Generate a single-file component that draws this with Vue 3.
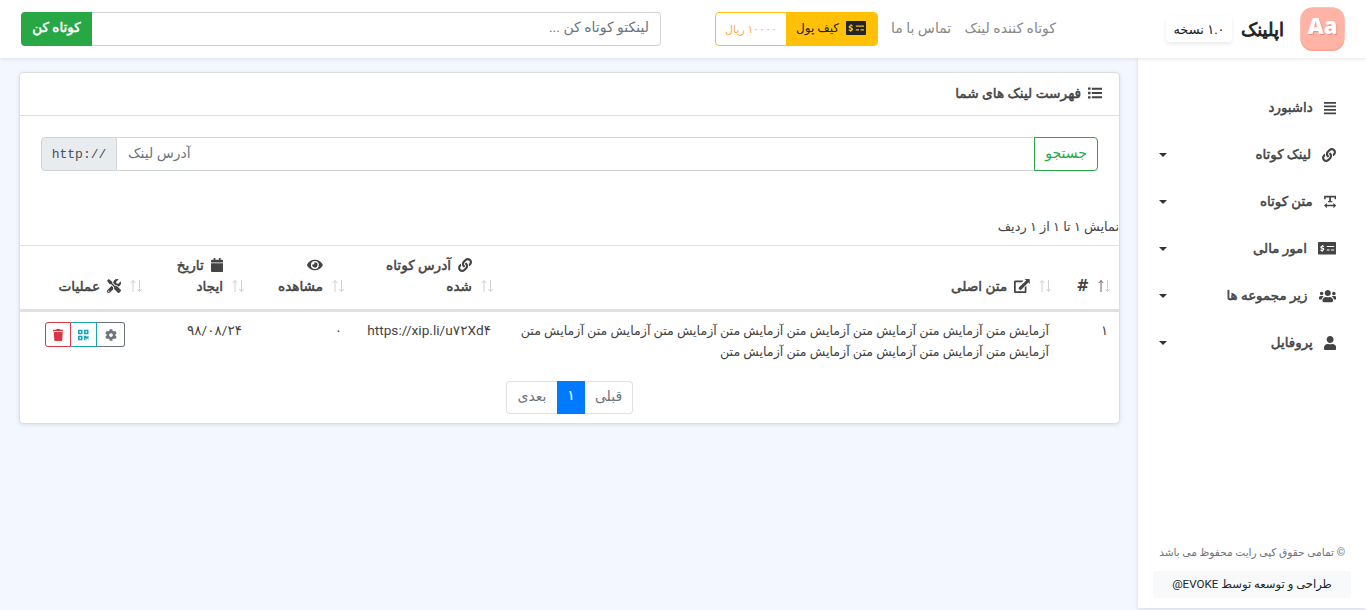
<script setup>
import { h } from 'vue'

const icons = {
  bars: [448, 512, 'M0 32h448v64H0zM0 160h448v64H0zM0 288h448v64H0zM0 416h448v64H0z'],
  list: [512, 512, 'M0 56h92v84H0zM0 214h92v84H0zM0 372h92v84H0zM140 62h372v72H140zM140 220h372v72H140zM140 378h372v72H140z'],
  link: [512, 512, 'M326.612 185.391c59.747 59.809 58.927 155.698.36 214.59-.11.12-.24.25-.36.37l-67.2 67.2c-59.27 59.27-155.699 59.262-214.96 0-59.27-59.26-59.27-155.7 0-214.96l37.106-37.106c9.84-9.84 26.786-3.3 27.294 10.606.648 17.722 3.826 35.527 9.69 52.721 1.986 5.822.567 12.262-3.783 16.612l-13.087 13.087c-28.026 28.026-28.905 73.66-1.155 101.96 28.024 28.579 74.086 28.749 102.325.51l67.2-67.19c28.191-28.191 28.073-73.757 0-101.83-3.701-3.694-7.429-6.564-10.341-8.569a16.037 16.037 0 0 1-6.947-12.606c-.396-10.567 3.348-21.456 11.698-29.806l21.054-21.055c5.521-5.521 14.182-6.199 20.584-1.731a152.482 152.482 0 0 1 20.522 17.197zM467.547 44.449c-59.261-59.262-155.69-59.27-214.96 0l-67.2 67.2c-.12.12-.25.25-.36.37-58.566 58.892-59.387 154.781.36 214.59a152.454 152.454 0 0 0 20.521 17.196c6.402 4.468 15.064 3.789 20.584-1.731l21.054-21.055c8.35-8.35 12.094-19.239 11.698-29.806a16.037 16.037 0 0 0-6.947-12.606c-2.912-2.005-6.64-4.875-10.341-8.569-28.073-28.073-28.191-73.639 0-101.83l67.2-67.19c28.239-28.239 74.3-28.069 102.325.51 27.75 28.3 26.872 73.934-1.155 101.96l-13.087 13.087c-4.35 4.35-5.769 10.79-3.783 16.612 5.864 17.194 9.042 34.999 9.69 52.721.509 13.906 17.454 20.446 27.294 10.606l37.106-37.106c59.271-59.259 59.271-155.699.001-214.959z'],
  textWidth: [448, 512, 'M4 28h440v124h-56V92H256v124h48v52H144v-52h48V92H60v60H4zM0 384l104-96v66h240v-66l104 96-104 96v-66H104v66z'],
  check: [640, 448, 'M24 0h592q24 0 24 24v400q0 24-24 24H24q-24 0-24-24V24Q0 0 24 0zM312 146v36h264v-36zM312 264v36h104v-36zM464 264v36h112v-36zM144 104v28c-76 10-74 94-12 106 48 10 48 36 12 38-20 0-34-8-46-14l-18 36c18 12 34 18 48 20v26h40v-26c72-12 74-100 10-114-48-10-50-34-10-34 14 0 24 4 38 10l16-34c-12-8-26-12-38-14v-28z'],
  users: [640, 512, 'M96 224c35.3 0 64-28.7 64-64s-28.7-64-64-64-64 28.7-64 64 28.7 64 64 64zm448 0c35.3 0 64-28.7 64-64s-28.7-64-64-64-64 28.7-64 64 28.7 64 64 64zm32 32h-64c-17.6 0-33.5 7.1-45.1 18.6 40.3 22.1 68.9 62 75.1 109.4h66c17.7 0 32-14.3 32-32v-32c0-35.3-28.7-64-64-64zm-256 0c61.9 0 112-50.1 112-112S381.9 32 320 32 208 82.1 208 144s50.1 112 112 112zm76.8 32h-8.3c-20.8 10-43.9 16-68.5 16s-47.6-6-68.5-16h-8.3C179.6 288 128 339.6 128 403.2V432c0 26.5 21.5 48 48 48h288c26.5 0 48-21.5 48-48v-28.8c0-63.6-51.6-115.2-115.2-115.2zm-223.7-13.4C161.5 263.1 145.6 256 128 256H64c-35.3 0-64 28.7-64 64v32c0 17.7 14.3 32 32 32h65.9c6.3-47.4 34.9-87.3 75.2-109.4z'],
  user: [448, 512, 'M224 256c70.7 0 128-57.3 128-128S294.7 0 224 0 96 57.3 96 128s57.3 128 128 128zm89.6 32h-16.7c-22.2 10.2-46.9 16-72.9 16s-50.6-5.8-72.9-16h-16.7C60.2 288 0 348.2 0 422.4V464c0 26.5 21.5 48 48 48h352c26.5 0 48-21.5 48-48v-41.6c0-74.2-60.2-134.4-134.4-134.4z'],
  external: [576, 512, 'M48 56h300l-62 64H64v328h328V306l64-62v220q0 48-48 48H48q-48 0-48-48V104q0-48 48-48zM392 0h160q24 0 24 24v160l-52-52-262 262-40 10-56-56 10-40L444 52z'],
  eye: [576, 512, 'M572.52 241.4C518.29 135.59 410.93 64 288 64S57.68 135.64 3.48 241.41a32.35 32.35 0 0 0 0 29.19C57.71 376.41 165.07 448 288 448s230.32-71.64 284.52-177.41a32.35 32.35 0 0 0 0-29.19zM288 400a144 144 0 1 1 144-144 143.93 143.93 0 0 1-144 144zm0-240a95.31 95.31 0 0 0-25.31 3.79 47.85 47.85 0 0 1-66.9 66.9A95.78 95.78 0 1 0 288 160z'],
  calendar: [448, 512, 'M12 192h424c6.6 0 12 5.4 12 12v260c0 26.5-21.5 48-48 48H48c-26.5 0-48-21.5-48-48V204c0-6.6 5.4-12 12-12zm436-44v-36c0-26.5-21.5-48-48-48h-48V12c0-6.6-5.4-12-12-12h-40c-6.6 0-12 5.4-12 12v52H160V12c0-6.6-5.4-12-12-12h-40c-6.6 0-12 5.4-12 12v52H48C21.5 64 0 85.5 0 112v36c0 6.6 5.4 12 12 12h424c6.6 0 12-5.4 12-12z'],
  tools: [512, 512, 'M501.1 395.7L384 278.6c-23.1-23.1-57.6-27.6-85.4-13.9L192 158.1V96L64 0 0 64l96 128h62.1l106.6 106.6c-13.6 27.8-9.2 62.3 13.9 85.4l117.1 117.1c14.6 14.6 38.2 14.6 52.7 0l52.7-52.7c14.5-14.6 14.5-38.2 0-52.7zM331.7 225c28.3 0 54.9 11 74.9 31l19.4 19.4c15.8-6.9 30.8-16.5 43.8-29.5 37.1-37.1 49.7-89.3 37.9-136.7-2.2-9-13.5-12.1-20.1-5.5l-74.4 74.4-67.9-11.3L334 98.9l74.4-74.4c6.6-6.6 3.4-17.9-5.7-20.2-47.4-11.7-99.6.9-136.6 37.9-28.5 28.5-41.9 66.1-41.2 103.6l82.1 82.1c8.1-1.9 16.5-2.9 24.7-2.9zm-103.9 82l-56.7-56.7L18.7 402.8c-25 25-25 65.5 0 90.5s65.5 25 90.5 0l123.6-123.6c-7.6-19.9-9.9-41.6-5-62.7zM64 472c-13.2 0-24-10.8-24-24 0-13.3 10.7-24 24-24s24 10.7 24 24c0 13.2-10.7 24-24 24z'],
  cog: [512, 512, 'M487.4 315.7l-42.6-24.6c4.3-23.2 4.3-47 0-70.2l42.6-24.6c4.9-2.8 7.1-8.6 5.5-14-11.1-35.6-30-67.8-54.7-94.6-3.8-4.1-10-5.1-14.8-2.3L380.8 110c-17.9-15.4-38.5-27.3-60.8-35.1V25.8c0-5.6-3.9-10.5-9.4-11.7-36.7-8.2-74.3-7.8-109.2 0-5.5 1.2-9.4 6.1-9.4 11.7V75c-22.2 7.9-42.8 19.8-60.8 35.1L88.7 85.5c-4.9-2.8-11-1.9-14.8 2.3-24.7 26.7-43.6 58.9-54.7 94.6-1.7 5.4.6 11.2 5.5 14L67.3 221c-4.3 23.2-4.3 47 0 70.2l-42.6 24.6c-4.9 2.8-7.1 8.6-5.5 14 11.1 35.6 30 67.8 54.7 94.6 3.8 4.1 10 5.1 14.8 2.3l42.6-24.6c17.9 15.4 38.5 27.3 60.8 35.1v49.2c0 5.6 3.9 10.5 9.4 11.7 36.7 8.2 74.3 7.8 109.2 0 5.5-1.2 9.4-6.1 9.4-11.7v-49.2c22.2-7.9 42.8-19.8 60.8-35.1l42.6 24.6c4.9 2.8 11 1.9 14.8-2.3 24.7-26.7 43.6-58.9 54.7-94.6 1.5-5.5-.7-11.3-5.6-14.1zM256 336c-44.1 0-80-35.9-80-80s35.9-80 80-80 80 35.9 80 80-35.9 80-80 80z'],
  qr: [448, 512, 'M0 224h192V32H0v192zM64 96h64v64H64V96zm192-64v192h192V32H256zm128 128h-64V96h64v64zM0 480h192V288H0v192zm64-128h64v64H64v-64zm352-64h32v128h-96v-32h-32v96h-64V288h96v32h64v-32zm0 160h32v32h-32v-32zm-64 0h32v32h-32v-32z'],
  trash: [448, 512, 'M432 32H312l-9.4-18.7A24 24 0 0 0 281.1 0H166.8a23.72 23.72 0 0 0-21.4 13.3L136 32H16A16 16 0 0 0 0 48v32a16 16 0 0 0 16 16h416a16 16 0 0 0 16-16V48a16 16 0 0 0-16-16zM53.2 467a48 48 0 0 0 47.9 45h245.8a48 48 0 0 0 47.9-45L416 128H32z'],
}

const Icon = (props) => {
  const [w, ht, d] = icons[props.name]
  const height = (props.size * ht) / 512
  return h('svg', { viewBox: `0 0 ${w} ${ht}`, width: (height * w) / ht, height, fill: 'currentColor' }, [
    h('path', { d, 'fill-rule': 'evenodd' }),
  ])
}
Icon.props = ['name', 'size']

const Sort = (props) =>
  h('svg', { viewBox: '0 0 14 14', width: 14, height: 14, fill: 'none', class: 'sort' }, [
    h('path', { d: 'M4 13V1.5M1.8 4L4 1.5L6.2 4', stroke: props.active ? '#666' : '#d0d0d0' }),
    h('path', { d: 'M10.5 1V12.5M8.3 10L10.5 12.5L12.7 10', stroke: '#d0d0d0' }),
  ])
Sort.props = ['active']

const menu = [
  { icon: 'bars', label: 'داشبورد', size: 14 },
  { icon: 'link', label: 'لینک کوتاه', size: 14, sub: true },
  { icon: 'textWidth', label: 'متن کوتاه', size: 14, sub: true },
  { icon: 'check', label: 'امور مالی', size: 14.4, sub: true },
  { icon: 'users', label: 'زیر مجموعه ها', size: 14, sub: true },
  { icon: 'user', label: 'پروفایل', size: 14, sub: true },
]
const columns = [
  { lines: ['#'], active: true, key: 'num' },
  { icon: 'external', lines: ['متن اصلی'] },
  { icon: 'link', lines: ['آدرس کوتاه', 'شده'] },
  { icon: 'eye', lines: ['', 'مشاهده'] },
  { icon: 'calendar', lines: ['تاریخ', 'ایجاد'] },
  { icon: 'tools', lines: ['عملیات'] },
]
</script>

<template>
  <div class="page">
    <header class="top">
      <div class="brand">
        <svg class="logo" viewBox="0 0 45 45" width="45" height="45">
          <rect x="0.5" y="0.5" width="44" height="43.5" rx="12" fill="#ff9f94" />
          <rect x="0.5" y="0.5" width="44" height="42" rx="12" fill="#ffb3a4" />
          <text class="logo-shade" x="23.5" y="27.5" text-anchor="middle">Aa</text>
          <text class="logo-text" x="22.5" y="26.5" text-anchor="middle">Aa</text>
        </svg>
        <span class="name">اپلینک</span>
        <span class="version">۱.۰ نسخه</span>
      </div>
      <nav class="nav"><a>کوتاه کننده لینک</a><a>تماس با ما</a></nav>
      <div class="wallet">
        <span class="wallet-btn"><Icon name="check" :size="16" /><span>کیف پول</span></span>
        <span class="amount">۱۰۰۰۰ ریال</span>
      </div>
      <div class="shorten">
        <div class="shorten-input">لینکتو کوتاه کن ...</div>
        <div class="shorten-btn">کوتاه کن</div>
      </div>
    </header>

    <div class="body">
      <aside class="side">
        <ul class="menu">
          <li v-for="m in menu" :key="m.icon">
            <Icon :name="m.icon" :size="m.size" />
            <span class="label">{{ m.label }}</span>
            <i v-if="m.sub" class="caret"></i>
          </li>
        </ul>
        <div class="foot">
          <div class="copy">© تمامی حقوق کپی رایت محفوظ می باشد</div>
          <div class="by">طراحی و توسعه توسط EVOKE@</div>
        </div>
      </aside>

      <main class="card">
        <div class="card-head"><Icon name="list" :size="14" /><span>فهرست لینک های شما</span></div>
        <div class="search">
          <div class="search-btn">جستجو</div>
          <div class="search-input">آدرس لینک</div>
          <div class="scheme">http://</div>
        </div>
        <div class="info">نمایش ۱ تا ۱ از ۱ ردیف</div>
        <div class="grid thead">
          <div v-for="(c, i) in columns" :key="i" class="th">
            <Sort :active="c.active" />
            <div class="th-lines">
              <div v-for="(l, j) in c.lines" :key="j" class="th-line" :class="{ hash: c.key }">
                <Icon v-if="j === 0 && c.icon" :name="c.icon" :size="14" /><span>{{ l }}</span>
              </div>
            </div>
          </div>
        </div>
        <div class="grid trow">
          <div class="td">۱</div>
          <div class="td">
            <div class="sample">آزمایش متن آزمایش متن آزمایش متن آزمایش متن آزمایش متن آزمایش متن آزمایش متن آزمایش متن</div>
            <div class="sample">آزمایش متن آزمایش متن آزمایش متن آزمایش متن آزمایش متن</div>
          </div>
          <div class="td ltr url">https://xip.li/u۷۲Xd۴</div>
          <div class="td">۰</div>
          <div class="td ltr date">۹۸/۰۸/۲۴</div>
          <div class="td ops">
            <span class="op gear"><Icon name="cog" :size="12" /></span>
            <span class="op qr"><Icon name="qr" :size="12" /></span>
            <span class="op del"><Icon name="trash" :size="12" /></span>
          </div>
        </div>
        <div class="pager">
          <span class="prev">قبلی</span><span class="on">۱</span><span class="next">بعدی</span>
        </div>
      </main>
    </div>
  </div>
</template>

<style>
body { background: #f3f7ff; overflow: hidden; }
</style>

<style scoped>
.page { direction: rtl; width: 1366px; height: 610px; display: flex; flex-direction: column; font-family: Roboto, "DejaVu Sans", sans-serif; font-size: 13px; color: #444; box-sizing: border-box; white-space: nowrap; }
.page * { box-sizing: border-box; }
svg { display: block; flex: none; }
.top { height: 58px; flex: none; background: #fff; box-shadow: 0 1px 4px rgba(0, 0, 0, .1); display: flex; align-items: center; padding: 0 21px; position: relative; z-index: 2; }
.brand { display: flex; align-items: center; width: 179px; }
.logo-text, .logo-shade { font: 900 22px "Open Sans", sans-serif; direction: ltr; fill: #fff; }
.logo-shade { fill: #ee8d80; }
.name, .shorten-btn, .menu li, .card-head, .thead { -webkit-text-stroke: .5px currentColor; }
.name { font-size: 18px; color: #222; margin-right: 16px; -webkit-text-stroke-width: .8px; }
.version { margin-right: auto; width: 66px; height: 26px; line-height: 27px; text-align: center; color: #222; border-radius: 4px; box-shadow: 0 2px 4px rgba(0, 0, 0, .09); font-size: 13px; }
.nav { display: flex; justify-content: space-between; width: 165px; margin-right: 110px; color: #888; font-size: 14px; padding-bottom: 3px; }
.wallet { display: flex; width: 163px; height: 34px; border: 1px solid #ffc107; border-radius: 4px; overflow: hidden; margin-right: 13px; }
.wallet-btn { background: #ffc107; color: #212529; width: 91px; display: flex; align-items: center; justify-content: center; gap: 7px; font-size: 12px; padding: 0 1px 2px 0; }
.amount { flex: 1; display: flex; align-items: center; justify-content: center; color: #ffa94d; font-size: 11px; }
.shorten { display: flex; width: 640px; height: 34px; margin-right: auto; }
.shorten-input { flex: 1; border: 1px solid #ced4da; border-left: 0; border-radius: 0 4px 4px 0; padding-right: 11px; line-height: 29px; color: #6c757d; font-size: 14px; }
.shorten-btn { width: 71px; background: #28a745; color: #fff; border-radius: 4px 0 0 4px; text-align: center; line-height: 31px; font-size: 13.5px; }
.body { flex: 1; display: flex; align-items: flex-start; }
.side { width: 228px; height: 550px; background: #fff; box-shadow: 0 1px 4px rgba(0, 0, 0, .12); display: flex; flex-direction: column; padding: 26px 15px 10px; }
.menu { list-style: none; margin: 0; padding: 0; }
.menu li { height: 47px; display: flex; align-items: center; padding: 0 15px 0 6px; font-size: 13.4px; }
.label { margin-right: 11px; }
.caret { margin-right: auto; border: 4.5px solid transparent; border-top-color: #333; border-bottom: 0; }
.foot { margin-top: auto; }
.copy { font-size: 10.6px; color: #6c757d; height: 25px; padding-right: 6px; }
.by { height: 27px; background: #f8f9fa; border-radius: 3px; text-align: center; line-height: 26px; color: #212529; font-size: 11.6px; }
.card { width: 1101px; height: 352px; margin: 14px 18px 0 0; background: #fff; border: 1px solid #dadde1; border-radius: 4px; box-shadow: 0 1px 4px rgba(0, 0, 0, .1); }
.card-head { height: 43px; border-bottom: 1px solid #dfe0e2; display: flex; align-items: center; gap: 7px; padding: 0 17px 3px; font-size: 13.7px; }
.search { display: flex; margin: 21px 21px 0; height: 34px; font-size: 14px; }
.search-btn { width: 64px; border: 1px solid #28a745; color: #28a745; border-radius: 0 4px 4px 0; text-align: center; line-height: 30px; }
.search-input { flex: 1; border: solid #ced4da; border-width: 1px 0; text-align: left; padding-left: 11px; line-height: 30px; color: #6c757d; }
.scheme { width: 76px; border: 1px solid #ced4da; background: #e9ecef; border-radius: 4px 0 0 4px; text-align: center; line-height: 34px; direction: ltr; font-family: "Liberation Mono", monospace; font-size: 13px; color: #495057; }
.info { height: 75px; padding-top: 47px; line-height: 18px; border-bottom: 1px solid #dee2e6; font-size: 12.9px; }
.grid { display: grid; grid-template-columns: 59px 558px 149px 100px 102px 131px; }
.thead { height: 66px; border-bottom: 3px solid #dee2e6; font-size: 13.6px; }
.th { display: flex; align-items: flex-end; padding: 0 8px 13px 0; }
.sort { margin: 0 0 3px 8px; }
.th-line { height: 21px; display: flex; align-items: center; gap: 7px; }
.hash { font: bold 15px "DejaVu Sans", sans-serif; -webkit-text-stroke-width: 0; }
.trow { height: 69px; }
.td { padding: 8px 11px 0 0; line-height: 21px; }
.ltr { direction: ltr; text-align: right; }
.url { font-size: 13.7px; }
.date { font-size: 13.6px; }
.sample { font-size: 12.67px; }
.ops { padding: 10px 1px 0 0; display: flex; justify-content: center; }
.op { height: 25px; width: 26px; border: 1px solid; display: flex; align-items: center; justify-content: center; }
.gear { width: 28px; color: #6c757d; border-left: 0; border-radius: 0 3px 3px 0; }
.qr { color: #17a2b8; border-left: 0; }
.del { color: #dc3545; border-radius: 3px 0 0 3px; }
.pager { display: flex; width: 127px; height: 33px; margin: 0 486px 0 0; color: #6c757d; line-height: 28px; text-align: center; font-size: 14px; }
.prev { width: 48px; border: 1px solid #dee2e6; border-left: 0; border-radius: 0 4px 4px 0; }
.on { width: 28px; background: #007bff; color: #fff; }
.next { width: 51px; border: 1px solid #dee2e6; border-right: 0; border-radius: 4px 0 0 4px; }
</style>
